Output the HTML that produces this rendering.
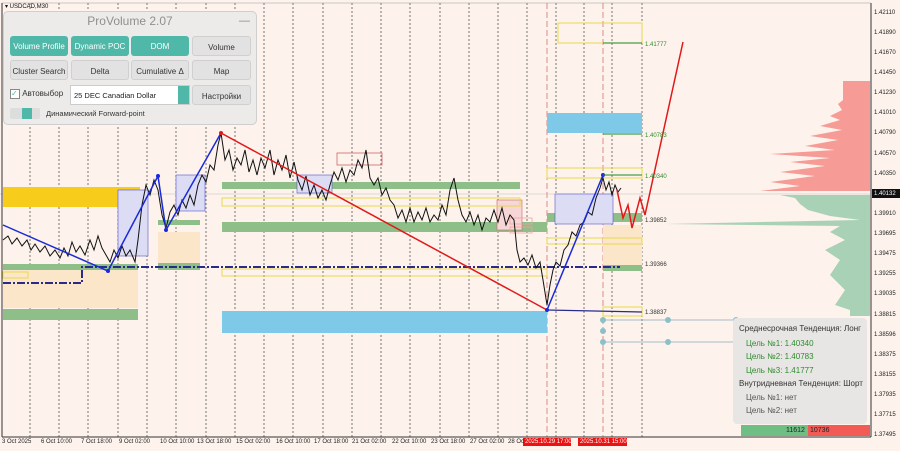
<!DOCTYPE html>
<html><head><meta charset="utf-8"><style>
body{margin:0;width:900px;height:451px;overflow:hidden;background:#fdf3ec;font-family:"Liberation Sans","DejaVu Sans",sans-serif;}
svg{position:absolute;left:0;top:0}
.panel{position:absolute;left:3px;top:11px;width:254px;height:114px;background:#ecebea;border:1px solid #cfcfcf;border-radius:5px;box-sizing:border-box;}
.title{position:absolute;left:0;top:2px;width:100%;text-align:center;font-size:12px;color:#8f8f8f}
.min{position:absolute;right:6px;top:3px;font-size:11px;color:#888}
.btn{position:absolute;height:20px;border-radius:3px;font-size:8px;text-align:center;line-height:22px;box-sizing:border-box}
.t{background:#4fb8a8;color:#fff}
.g{background:#e2e2e2;color:#333;border:1px solid #d0d0d0}
.info{position:absolute;left:733px;top:318px;width:134px;height:106px;background:#e8e6e4;border-radius:4px;font-size:8px;color:#333}
.info div{position:absolute;white-space:nowrap}
.gr{color:#2e8b2e}
.ax{position:absolute;left:874px;font-size:6px;color:#222}
.dt{position:absolute;top:439px;font-size:6px;color:#222;white-space:nowrap}
</style></head><body>
<svg width="900" height="451" viewBox="0 0 900 451">
<g stroke="#555" stroke-width="0.8" stroke-dasharray="2,2">
<line x1="30" y1="3" x2="30" y2="437"/><line x1="59" y1="3" x2="59" y2="437"/><line x1="88" y1="3" x2="88" y2="437"/><line x1="118" y1="3" x2="118" y2="437"/><line x1="147" y1="3" x2="147" y2="437"/><line x1="176" y1="3" x2="176" y2="437"/><line x1="206" y1="3" x2="206" y2="437"/><line x1="235" y1="3" x2="235" y2="437"/><line x1="264" y1="3" x2="264" y2="437"/><line x1="293" y1="3" x2="293" y2="437"/><line x1="323" y1="3" x2="323" y2="437"/><line x1="352" y1="3" x2="352" y2="437"/><line x1="381" y1="3" x2="381" y2="437"/><line x1="410" y1="3" x2="410" y2="437"/><line x1="440" y1="3" x2="440" y2="437"/><line x1="469" y1="3" x2="469" y2="437"/><line x1="498" y1="3" x2="498" y2="437"/><line x1="527" y1="3" x2="527" y2="437"/><line x1="556" y1="3" x2="556" y2="437"/><line x1="584" y1="3" x2="584" y2="437"/><line x1="612" y1="3" x2="612" y2="437"/><line x1="642" y1="3" x2="642" y2="437"/>
</g>
<g stroke="#d88" stroke-width="1" stroke-dasharray="6,3"><line x1="547" y1="3" x2="547" y2="437"/><line x1="603" y1="3" x2="603" y2="437"/></g>
<line x1="0" y1="194" x2="870" y2="194" stroke="#bbb" stroke-width="0.6"/>
<!-- left zones -->
<rect x="3" y="187" width="137" height="20" fill="#f7cc1a"/>
<rect x="118" y="192" width="22" height="18" fill="#d9b43a"/>
<rect x="3" y="270" width="135" height="38" fill="#fbe6c9"/>
<rect x="3" y="264" width="135" height="6" fill="#8fbf88"/>
<rect x="3" y="309" width="135" height="11" fill="#8fbf88"/>
<rect x="158" y="232" width="42" height="34" fill="#fbe6c9"/>
<rect x="158" y="220" width="42" height="5" fill="#8fbf88"/>
<rect x="158" y="263" width="42" height="7" fill="#8fbf88"/>
<rect x="118" y="190" width="30" height="66" fill="#dcdcf5" stroke="#55c" stroke-width="0.6"/>
<rect x="176" y="175" width="29" height="36" fill="#dcdcf5" stroke="#55c" stroke-width="0.6"/>
<rect x="222" y="182" width="298" height="7" fill="#8fbf88"/>
<rect x="222" y="222" width="325" height="10" fill="#8fbf88"/>
<rect x="222" y="311" width="325" height="22" fill="#7ec8e8"/>
<rect x="547" y="113" width="95" height="20" fill="#7ec8e8"/>
<rect x="547" y="213" width="95" height="9" fill="#8fbf88"/>
<rect x="603" y="264" width="39" height="7" fill="#8fbf88"/>
<rect x="603" y="225" width="39" height="40" fill="#fbe6c9"/>
<rect x="555" y="194" width="58" height="30" fill="#dcdcf5" stroke="#55c" stroke-width="0.6"/>
<rect x="297" y="175" width="35" height="18" fill="#dcdcf5" stroke="#55c" stroke-width="0.6"/>
<rect x="497" y="200" width="25" height="30" fill="#f6d6d6" stroke="#c66" stroke-width="0.6"/>
<rect x="337" y="153" width="45" height="12" fill="none" stroke="#c66" stroke-width="0.8"/>
<g fill="none" stroke="#e8d84a" stroke-width="1">
<rect x="222" y="198" width="298" height="8"/><rect x="222" y="269" width="325" height="7"/>
<rect x="558" y="23" width="84" height="20"/><rect x="547" y="168" width="95" height="10"/>
<rect x="547" y="238" width="95" height="6"/><rect x="603" y="307" width="39" height="9"/>
<rect x="3" y="272" width="25" height="6"/>
</g>
<g fill="none" stroke="#f0a0a0" stroke-width="0.8"><rect x="510" y="218" width="22" height="6"/><rect x="510" y="227" width="22" height="6"/></g>
<!-- dash-dot navy -->
<path d="M3 283 H82 V267 H620" stroke="#2a2a8a" stroke-width="2" stroke-dasharray="8,2,2,2" fill="none"/>
<line x1="547" y1="310" x2="642" y2="312" stroke="#2a2a8a" stroke-width="1.2"/>
<!-- price -->
<polyline fill="none" stroke="#111" stroke-width="1" points="3,240 8,236 12,244 17,238 22,246 27,240 31,250 35,244 40,252 45,246 50,256 55,250 60,258 64,248 68,256 72,242 76,252 80,246 85,255 90,240 94,250 98,236 102,248 106,255 110,262 114,250 118,258 122,246 126,256 130,250 135,262 138,240 142,205 146,185 150,195 154,180 158,190 162,215 166,228 170,212 174,205 178,215 182,200 186,208 190,195 194,205 198,185 202,175 206,182 210,165 214,170 218,145 221,133 225,160 229,150 233,170 237,158 241,165 245,150 249,172 253,160 257,175 261,158 265,168 270,150 274,175 278,160 282,170 286,155 290,178 294,162 298,180 302,190 306,176 310,195 314,185 318,198 322,190 326,200 330,185 334,172 338,180 342,168 346,182 350,170 354,175 358,160 362,168 366,150 370,178 374,185 378,178 382,195 386,188 390,200 394,205 398,218 402,210 406,222 410,208 414,222 418,212 422,220 426,208 430,222 434,215 438,220 442,205 446,215 450,190 454,178 458,200 462,215 466,222 470,212 474,225 478,215 482,230 486,218 490,222 494,210 498,222 502,208 506,225 510,215 514,220 517,250 520,262 524,258 528,265 532,255 536,268 540,262 543,280 547,305 550,285 553,270 556,262 560,266 564,250 568,245 572,232 576,236 580,225 584,222 588,212 592,215 596,198 600,188 603,178 606,190 609,182 612,195 615,185 618,192 621,188"/>
<!-- trend lines -->
<polyline fill="none" stroke="#1a2ad8" stroke-width="1.5" points="3,225 108,271 158,176 166,230 221,133"/>
<line x1="221" y1="133" x2="547" y2="310" stroke="#e01a1a" stroke-width="1.5"/>
<line x1="547" y1="310" x2="603" y2="175" stroke="#1a2ad8" stroke-width="1.5"/>
<polyline fill="none" stroke="#e01a1a" stroke-width="1.5" points="617,190 623,218 628,205 632,228 640,198 645,215 683,42"/>
<g fill="#1a2ad8"><circle cx="108" cy="271" r="2"/><circle cx="158" cy="176" r="2"/><circle cx="166" cy="230" r="2"/><circle cx="547" cy="310" r="2"/><circle cx="603" cy="175" r="2"/></g>
<circle cx="221" cy="133" r="2" fill="#e01a1a"/>
<!-- target lines -->
<g stroke="#1a8a1a" stroke-width="1"><line x1="603" y1="43" x2="642" y2="43"/><line x1="603" y1="134" x2="642" y2="134"/><line x1="603" y1="175" x2="642" y2="175"/></g>
<g font-size="6" fill="#2e8b2e"><text x="645" y="46">1.41777</text><text x="645" y="137">1.40783</text><text x="645" y="178">1.40340</text></g>
<g font-size="6" fill="#333"><text x="645" y="222">1.39852</text><text x="645" y="266">1.39366</text><text x="645" y="314">1.38837</text></g>
<!-- connector lines -->
<g stroke="#8ab" stroke-width="0.8"><line x1="603" y1="320" x2="735" y2="320"/><line x1="603" y1="342" x2="735" y2="342"/></g>
<g fill="#8cc0c8"><circle cx="603" cy="320" r="3"/><circle cx="603" cy="331" r="3"/><circle cx="603" cy="342" r="3"/><circle cx="668" cy="320" r="3"/><circle cx="668" cy="342" r="3"/><circle cx="736" cy="320" r="3"/><circle cx="736" cy="331" r="3"/><circle cx="736" cy="342" r="3"/></g>
<!-- histogram -->
<path d="M870 81 H843 V100 L838 104 L842 110 L830 116 L840 120 L820 126 L842 130 L810 136 L838 140 L805 146 L835 150 L770 154 L830 158 L790 162 L825 166 L780 172 L815 176 L770 182 L800 186 L760 191 H870 Z" fill="#f79b96"/>
<path d="M870 195 H780 L795 198 L800 204 L808 210 L830 216 L860 220 L665 224 L840 226 L830 232 L845 240 L825 250 L840 260 L830 275 L845 290 L835 305 L850 310 L870 310 Z" fill="#a9d1b5"/>
<rect x="850" y="310" width="20" height="6" fill="#a9d1b5"/>
<rect x="741" y="425" width="67" height="11" fill="#6fbf85"/>
<rect x="808" y="425" width="62" height="11" fill="#f25a55"/>
<!-- axes -->
<line x1="871" y1="3" x2="871" y2="437" stroke="#333" stroke-width="1"/>
<line x1="2" y1="437" x2="871" y2="437" stroke="#333" stroke-width="1"/>
<line x1="2" y1="3" x2="871" y2="3" stroke="#999" stroke-width="0.5"/>
<line x1="2" y1="3" x2="2" y2="437" stroke="#333" stroke-width="1"/>
<rect x="872" y="189" width="28" height="9" fill="#111"/>
<rect x="523" y="438" width="48" height="8" fill="#ee1111"/><rect x="578" y="438" width="49" height="8" fill="#ee1111"/>
</svg>
<div style="position:absolute;left:5px;top:3px;font-size:6px;color:#111">▾ USDCAD,M30</div>
<div class="panel">
<div class="title">ProVolume 2.07</div><div class="min">—</div>
<div class="btn t" style="left:6px;top:24px;width:58px">Volume Profile</div>
<div class="btn t" style="left:67px;top:24px;width:58px">Dynamic POC</div>
<div class="btn t" style="left:127px;top:24px;width:58px">DOM</div>
<div class="btn g" style="left:188px;top:24px;width:59px">Volume</div>
<div class="btn g" style="left:6px;top:48px;width:58px">Cluster Search</div>
<div class="btn g" style="left:67px;top:48px;width:58px">Delta</div>
<div class="btn g" style="left:127px;top:48px;width:58px">Cumulative Δ</div>
<div class="btn g" style="left:188px;top:48px;width:59px">Map</div>
<div style="position:absolute;left:6px;top:77px;font-size:8px;color:#333"><span style="display:inline-block;width:8px;height:8px;border:1px solid #888;background:#fff;color:#4fb8a8;font-size:8px;line-height:8px">✓</span> Автовыбор</div>
<div style="position:absolute;left:66px;top:73px;width:120px;height:20px;background:#fff;border:1px solid #ccc;box-sizing:border-box;font-size:7.5px;line-height:19px;padding-left:3px;color:#222">25 DEC Canadian Dollar<span style="position:absolute;right:0;top:0;width:11px;height:18px;background:#4fb8a8"></span></div>
<div class="btn g" style="left:188px;top:73px;width:59px">Настройки</div>
<div style="position:absolute;left:6px;top:96px;width:30px;height:11px;background:#ddd;border-radius:2px"><div style="position:absolute;left:12px;top:0;width:10px;height:11px;background:#4fb8a8"></div></div>
<div style="position:absolute;left:42px;top:97px;font-size:7.5px;color:#333">Динамический Forward-point</div>
</div>
<div class="info">
<div style="left:6px;top:6px">Среднесрочная Тенденция: Лонг</div>
<div class="gr" style="left:13px;top:21px">Цель №1: 1.40340</div>
<div class="gr" style="left:13px;top:34px">Цель №2: 1.40783</div>
<div class="gr" style="left:13px;top:48px">Цель №3: 1.41777</div>
<div style="left:6px;top:61px">Внутридневная Тенденция: Шорт</div>
<div style="left:13px;top:75px;color:#555">Цель №1: нет</div>
<div style="left:13px;top:88px;color:#555">Цель №2: нет</div>
</div>
<div style="position:absolute;left:786px;top:427px;font-size:7px;color:#222">11612</div>
<div style="position:absolute;left:810px;top:427px;font-size:7px;color:#222">10736</div>
<div class="ax" style="top:10px">1.42110</div><div class="ax" style="top:30px">1.41890</div><div class="ax" style="top:50px">1.41670</div><div class="ax" style="top:70px">1.41450</div><div class="ax" style="top:90px">1.41230</div><div class="ax" style="top:110px">1.41010</div><div class="ax" style="top:130px">1.40790</div><div class="ax" style="top:151px">1.40570</div><div class="ax" style="top:171px">1.40350</div><div class="ax" style="top:191px;color:#fff">1.40132</div><div class="ax" style="top:211px">1.39910</div><div class="ax" style="top:231px">1.39695</div><div class="ax" style="top:251px">1.39475</div><div class="ax" style="top:271px">1.39255</div><div class="ax" style="top:291px">1.39035</div><div class="ax" style="top:312px">1.38815</div><div class="ax" style="top:332px">1.38596</div><div class="ax" style="top:352px">1.38375</div><div class="ax" style="top:372px">1.38155</div><div class="ax" style="top:392px">1.37935</div><div class="ax" style="top:412px">1.37715</div><div class="ax" style="top:432px">1.37495</div>
<div class="dt" style="left:2px">3 Oct 2025</div><div class="dt" style="left:41px">6 Oct 10:00</div><div class="dt" style="left:81px">7 Oct 18:00</div><div class="dt" style="left:119px">9 Oct 02:00</div><div class="dt" style="left:160px">10 Oct 10:00</div><div class="dt" style="left:197px">13 Oct 18:00</div><div class="dt" style="left:236px">15 Oct 02:00</div><div class="dt" style="left:276px">16 Oct 10:00</div><div class="dt" style="left:314px">17 Oct 18:00</div><div class="dt" style="left:352px">21 Oct 02:00</div><div class="dt" style="left:392px">22 Oct 10:00</div><div class="dt" style="left:431px">23 Oct 18:00</div><div class="dt" style="left:470px">27 Oct 02:00</div><div class="dt" style="left:508px">28 Oc</div>
<div class="dt" style="left:525px;color:#fff">2025.10.29 17:00</div><div class="dt" style="left:580px;color:#fff">2025.10.31 15:00</div>
</body></html>
